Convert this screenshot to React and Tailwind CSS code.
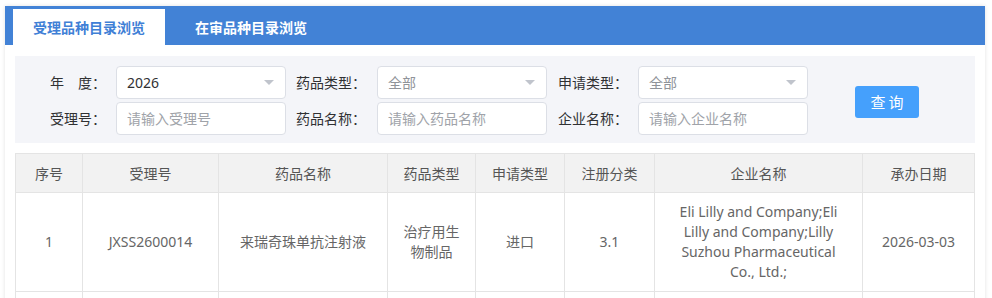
import { useState } from "react";

const columns = [
  { key: "no", title: "序号", width: 67 },
  { key: "acceptNo", title: "受理号", width: 136 },
  { key: "drugName", title: "药品名称", width: 169 },
  { key: "drugType", title: "药品类型", width: 88 },
  { key: "applyType", title: "申请类型", width: 89 },
  { key: "regClass", title: "注册分类", width: 90 },
  { key: "company", title: "企业名称", width: 208 },
  { key: "date", title: "承办日期", width: 112 },
];

const rows = [
  {
    no: "1",
    acceptNo: "JXSS2600014",
    drugName: "来瑞奇珠单抗注射液",
    drugType: "治疗用生物制品",
    applyType: "进口",
    regClass: "3.1",
    company: "Eli Lilly and Company;Eli Lilly and Company;Lilly Suzhou Pharmaceutical Co., Ltd.;",
    date: "2026-03-03",
  },
];

function Arrow() {
  return (
    <svg width="10" height="5" viewBox="0 0 10 5" className="shrink-0">
      <path d="M0 0 L10 0 L5 5 Z" fill="#c0c4cc" />
    </svg>
  );
}

function SelectBox({ value, dark }) {
  return (
    <div className="w-[170px] h-[33px] border border-[#dcdfe6] rounded-[4px] bg-white flex items-center justify-between pl-[10px] pr-[11px]">
      <span className={dark ? "text-[#303133]" : "text-[#909399]"}>{value}</span>
      <Arrow />
    </div>
  );
}

function TextBox({ placeholder }) {
  return (
    <input
      placeholder={placeholder}
      className="w-[170px] h-[33px] border border-[#dcdfe6] rounded-[4px] bg-white px-[10px] outline-none placeholder:text-[#a0a3a9]"
    />
  );
}

function Label({ children, w }) {
  return (
    <div className={`${w} text-right text-[#303133] whitespace-nowrap`}>{children}</div>
  );
}

export default function App() {
  const [tab, setTab] = useState(0);

  return (
    <div
      className="bg-white min-h-screen pt-[6px] pl-[5px] text-[14px]"
      style={{ fontFamily: '"Noto Sans", "Noto Sans CJK SC", sans-serif' }}
    >
      <div className="w-[980px] bg-white shadow-[0_0_4px_rgba(0,0,0,0.12)] min-h-[300px]">
        {/* Tabs */}
        <div className="h-[39px] bg-[#4282d6] flex items-end pl-[8px]">
          <button
            onClick={() => setTab(0)}
            className={`h-[36px] w-[152px] flex items-center justify-center font-bold ${
              tab === 0 ? "bg-white text-[#3f80d6]" : "text-white"
            }`}
          >
            受理品种目录浏览
          </button>
          <button
            onClick={() => setTab(1)}
            className={`h-[36px] px-[30px] flex items-center font-bold ${
              tab === 1 ? "bg-white text-[#3f80d6]" : "text-white"
            }`}
          >
            在审品种目录浏览
          </button>
        </div>

        <div className="px-[10px] pt-[11px]">
          {/* Filter */}
          <div className="h-[87px] bg-[#f4f5f9] pt-[10px] flex items-start">
            <div className="flex flex-col gap-[3px]">
              <div className="flex items-center">
                <Label w="w-[101px] pr-[10px]">年　度：</Label>
                <SelectBox value="2026" dark />
                <Label w="w-[91px] pr-[11px]">药品类型：</Label>
                <SelectBox value="全部" />
                <Label w="w-[91px] pr-[10px]">申请类型：</Label>
                <SelectBox value="全部" />
              </div>
              <div className="flex items-center">
                <Label w="w-[101px] pr-[10px]">受理号：</Label>
                <TextBox placeholder="请输入受理号" />
                <Label w="w-[91px] pr-[11px]">药品名称：</Label>
                <TextBox placeholder="请输入药品名称" />
                <Label w="w-[91px] pr-[10px]">企业名称：</Label>
                <TextBox placeholder="请输入企业名称" />
              </div>
            </div>
            <button className="ml-[47px] mt-[20px] w-[64px] h-[32px] rounded-[3px] bg-[#45a0fc] text-white text-[15px] tracking-[3px] pl-[3px]">
              查询
            </button>
          </div>

          {/* Table */}
          <table className="mt-[10px] w-[959px] table-fixed border-collapse">
            <colgroup>
              {columns.map((c) => (
                <col key={c.key} style={{ width: c.width }} />
              ))}
            </colgroup>
            <thead>
              <tr>
                {columns.map((c) => (
                  <th
                    key={c.key}
                    className="h-[39px] p-0 border border-[#e4e4e4] bg-[#f2f2f2] font-normal text-[#555] text-center"
                  >
                    {c.title}
                  </th>
                ))}
              </tr>
            </thead>
            <tbody>
              {rows.map((r) => (
                <tr key={r.no}>
                  {columns.map((c) => (
                    <td
                      key={c.key}
                      className={`border border-[#e4e4e4] py-[9px] leading-[20px] text-center text-[#666] align-middle ${
                        c.key === "company" ? "px-[14px]" : "px-[10px]"
                      }`}
                    >
                      {r[c.key]}
                    </td>
                  ))}
                </tr>
              ))}
              <tr>
                {columns.map((c) => (
                  <td key={c.key} className="border border-[#e4e4e4] h-[40px]" />
                ))}
              </tr>
            </tbody>
          </table>
        </div>
      </div>
    </div>
  );
}
